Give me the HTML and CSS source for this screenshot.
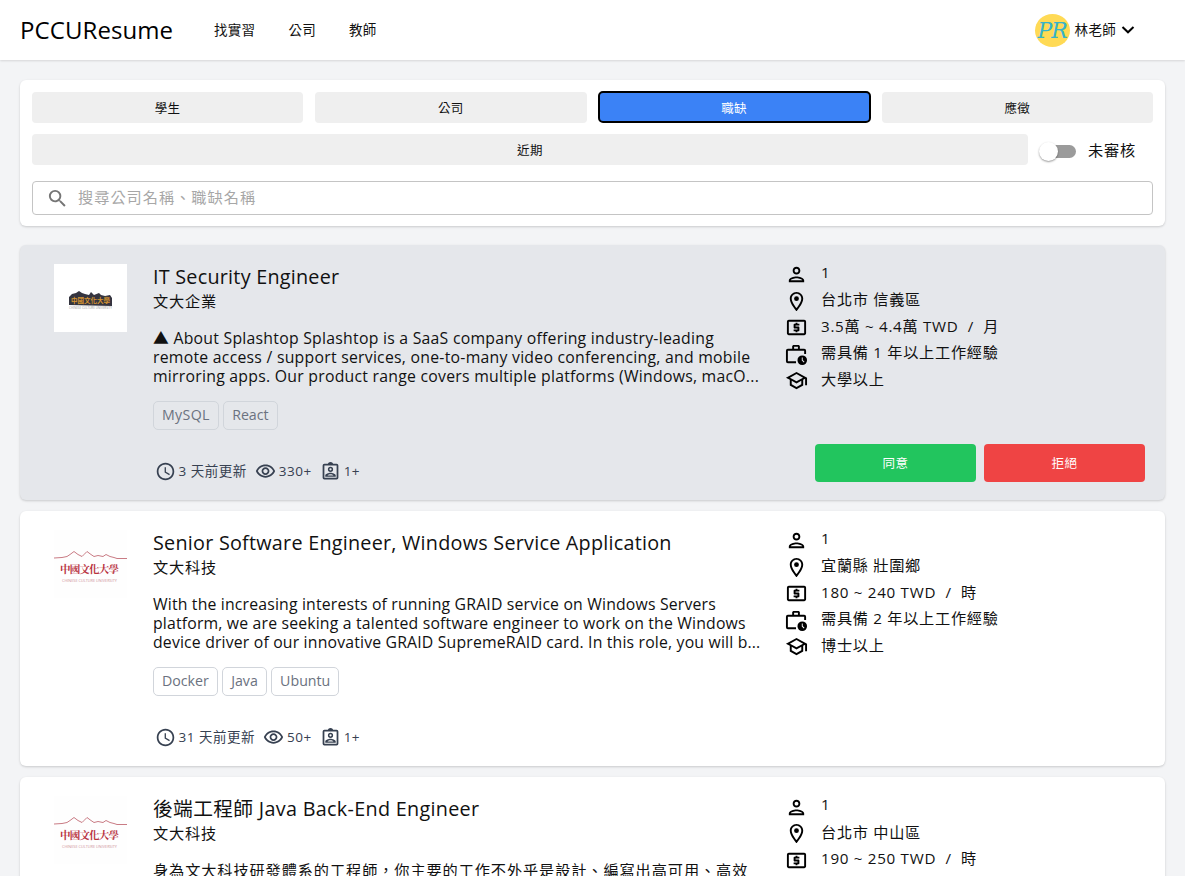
FILE: index.html
```html
<!DOCTYPE html>
<html lang="zh-Hant">
<head>
<meta charset="utf-8">
<title>PCCUResume</title>
<link rel="stylesheet" href="styles.css">
</head>
<body>
<svg class="sprite" aria-hidden="true">
  <symbol id="search" viewBox="0 0 24 24"><path d="M15.5 14h-.79l-.28-.27A6.471 6.471 0 0 0 16 9.500 6.500 6.500 0 1 0 9.500 16c1.610 0 3.090-.59 4.230-1.570l.27.28v.79l5 4.990L20.490 19l-4.990-5zm-6 0C7.010 14 5 11.990 5 9.500S7.010 5 9.500 5 14 7.010 14 9.500 11.990 14 9.500 14z"/></symbol>
  <symbol id="person" viewBox="0 0 24 24"><path d="M12 6c1.100 0 2 .9 2 2s-.9 2-2 2-2-.9-2-2 .9-2 2-2m0 10c2.700 0 5.800 1.290 6 2H6c.23-.72 3.310-2 6-2m0-12C9.790 4 8 5.790 8 8s1.790 4 4 4 4-1.790 4-4-1.790-4-4-4zm0 10c-2.670 0-8 1.340-8 4v2h16v-2c0-2.660-5.330-4-8-4z"/></symbol>
  <symbol id="place" viewBox="0 0 24 24"><path d="M12 2C8.130 2 5 5.130 5 9c0 5.250 7 13 7 13s7-7.750 7-13c0-3.870-3.130-7-7-7zM7 9c0-2.760 2.240-5 5-5s5 2.240 5 5c0 2.880-2.880 7.190-5 9.880C9.920 16.210 7 11.850 7 9z"/><circle cx="12" cy="9" r="2.500"/></symbol>
  <symbol id="pay" viewBox="0 0 24 24"><path d="M11 17h2v-1h1c.55 0 1-.45 1-1v-3c0-.55-.45-1-1-1h-3v-1h4V8h-2V7h-2v1h-1c-.55 0-1 .45-1 1v3c0 .55.45 1 1 1h3v1H9v2h2v1zm9-13H4c-1.110 0-1.990.89-1.990 2L2 18c0 1.110.89 2 2 2h16c1.110 0 2-.89 2-2V6c0-1.110-.89-2-2-2zm0 14H4V6h16v12z"/></symbol>
  <symbol id="work" viewBox="0 0 24 24"><path fill="none" stroke="currentColor" stroke-width="2" d="M11.500 20H3a1 1 0 0 1-1-1V8a1 1 0 0 1 1-1h17a1 1 0 0 1 1 1v3.500M8.500 7V3.500L9 3h5l.5.500V7"/><path fill-rule="evenodd" d="M18 13a5 5 0 1 0 0 10 5 5 0 0 0 0-10zm1.650 7.350L17.500 18.200V15h1v2.790l1.850 1.850z"/></symbol>
  <symbol id="school" viewBox="0 0 24 24"><path d="M12 3L1 9l4 2.180v6L12 21l7-3.820v-6l2-1.090V17h2V9L12 3zm6.820 6L12 12.720 5.180 9 12 5.280 18.820 9zM17 15.990l-5 2.730-5-2.730v-3.720L12 15l5-2.730v3.720z"/></symbol>
  <symbol id="clock" viewBox="0 0 24 24"><path d="M11.990 2C6.470 2 2 6.480 2 12s4.470 10 9.990 10C17.520 22 22 17.520 22 12S17.520 2 11.990 2zM12 20c-4.420 0-8-3.580-8-8s3.580-8 8-8 8 3.580 8 8-3.580 8-8 8zm.5-13H11v6l5.250 3.150.75-1.230-4.500-2.670z"/></symbol>
  <symbol id="eye" viewBox="0 0 24 24"><path d="M12 6c3.790 0 7.170 2.130 8.820 5.500C19.170 14.870 15.790 17 12 17s-7.170-2.130-8.820-5.500C4.830 8.130 8.210 6 12 6m0-2C7 4 2.730 7.110 1 11.500 2.730 15.890 7 19 12 19s9.270-3.110 11-7.500C21.270 7.110 17 4 12 4zm0 5c1.380 0 2.500 1.120 2.500 2.500S13.380 14 12 14s-2.500-1.120-2.500-2.500S10.620 9 12 9m0-2c-2.480 0-4.500 2.020-4.500 4.500S9.520 16 12 16s4.500-2.020 4.500-4.500S14.480 7 12 7z"/></symbol>
  <symbol id="badge" viewBox="0 0 24 24"><rect x="4" y="4" width="16" height="16" rx="1" fill="none" stroke="currentColor" stroke-width="2"/><path d="M9 4a3 3 0 0 1 6 0z"/><path fill-rule="evenodd" d="M12 6.500a3 3 0 1 0 0 6 3 3 0 0 0 0-6zm0 1.700a1.300 1.300 0 1 1 0 2.600 1.300 1.300 0 0 1 0-2.600zM6 18v-1.500c0-2 4-3.200 6-3.200s6 1.200 6 3.200V18zm2.500-1.400h7c-.7-.8-2.300-1.400-3.500-1.400s-2.800.6-3.500 1.400z"/></symbol>
</svg>

<header class="topbar">
  <div class="brand">PCCUResume</div>
  <nav class="nav"><a>找實習</a><a>公司</a><a>教師</a></nav>
  <div class="user">
    <span class="avatar">PR</span><span class="user-name">林老師</span>
    <svg class="chevron" viewBox="0 0 14 10"><path d="M1.500 2l5.500 5.300L12.500 2"/></svg>
  </div>
</header>

<main class="page">
  <section class="panel filters">
    <div class="tabs">
      <button class="tab">學生</button><button class="tab">公司</button><button class="tab tab-active">職缺</button><button class="tab">應徵</button>
    </div>
    <div class="recent-row">
      <button class="tab recent">近期</button>
      <span class="switch"><span class="track"></span><span class="thumb"></span></span>
      <span class="switch-label">未審核</span>
    </div>
    <div class="search"><svg class="search-icon"><use href="#search"/></svg><span class="placeholder">搜尋公司名稱、職缺名稱</span></div>
  </section>

  <article class="panel job job-selected">
    <svg class="logo" viewBox="0 0 73 68"><path fill="#34343f" d="M15 41v-8l3-3 4-1 3-2 3 2 3 1 4 1 2-3 3 3 5-2 2 2 4 1 5-1 2 3v8z"/><text class="logo-gold" x="17" y="39" textLength="39">中國文化大學</text><text class="logo-small" x="15" y="44.500" textLength="43" lengthAdjust="spacingAndGlyphs">CHINESE CULTURE UNIVERSITY</text></svg>
    <div class="info">
      <h2 class="title">IT Security Engineer</h2>
      <div class="company">文大企業</div>
      <p class="desc desc-loose">▲ About Splashtop Splashtop is a SaaS company offering industry-leading<br>remote access / support services, one-to-many video conferencing, and mobile<br>mirroring apps. Our product range covers multiple platforms (Windows, macO...</p>
      <div class="tags"><span class="tag tag-wide">MySQL</span><span class="tag">React</span></div>
      <div class="meta"><svg class="mi"><use href="#clock"/></svg><span class="updated">3 天前更新</span><svg class="mi"><use href="#eye"/></svg><span class="views">330+</span><svg class="mi"><use href="#badge"/></svg><span>1+</span></div>
    </div>
    <div class="side">
      <ul class="facts">
        <li><svg><use href="#person"/></svg><span>1</span></li>
        <li><svg><use href="#place"/></svg><span>台北市 信義區</span></li>
        <li><svg><use href="#pay"/></svg><span>3.5萬 ~ 4.4萬 TWD&nbsp; /&nbsp; 月</span></li>
        <li><svg><use href="#work"/></svg><span>需具備 1 年以上工作經驗</span></li>
        <li><svg><use href="#school"/></svg><span>大學以上</span></li>
      </ul>
      <div class="actions"><button class="btn approve">同意</button><button class="btn reject">拒絕</button></div>
    </div>
  </article>

  <article class="panel job">
    <svg class="logo" viewBox="0 0 73 68"><path class="ridge" d="M0 28l8-.5 5-1 3-2 4-3 4 3 4 2 2-2 3-3 4 3 3 2 4-1 5 1 3-2 4 2 4 1 3 1h10"/><text class="logo-main" x="6" y="43" textLength="59">中國文化大學</text><text class="logo-caption" x="8" y="52" textLength="55" lengthAdjust="spacingAndGlyphs">CHINESE CULTURE UNIVERSITY</text></svg>
    <div class="info">
      <h2 class="title">Senior Software Engineer, Windows Service Application</h2>
      <div class="company">文大科技</div>
      <p class="desc">With the increasing interests of running GRAID service on Windows Servers<br>platform, we are seeking a talented software engineer to work on the Windows<br>device driver of our innovative GRAID SupremeRAID card. In this role, you will b...</p>
      <div class="tags"><span class="tag">Docker</span><span class="tag">Java</span><span class="tag">Ubuntu</span></div>
      <div class="meta"><svg class="mi"><use href="#clock"/></svg><span class="updated">31 天前更新</span><svg class="mi"><use href="#eye"/></svg><span class="views">50+</span><svg class="mi"><use href="#badge"/></svg><span>1+</span></div>
    </div>
    <div class="side">
      <ul class="facts">
        <li><svg><use href="#person"/></svg><span>1</span></li>
        <li><svg><use href="#place"/></svg><span>宜蘭縣 壯圍鄉</span></li>
        <li><svg><use href="#pay"/></svg><span>180 ~ 240 TWD&nbsp; /&nbsp; 時</span></li>
        <li><svg><use href="#work"/></svg><span>需具備 2 年以上工作經驗</span></li>
        <li><svg><use href="#school"/></svg><span>博士以上</span></li>
      </ul>
    </div>
  </article>

  <article class="panel job">
    <svg class="logo" viewBox="0 0 73 68"><path class="ridge" d="M0 28l8-.5 5-1 3-2 4-3 4 3 4 2 2-2 3-3 4 3 3 2 4-1 5 1 3-2 4 2 4 1 3 1h10"/><text class="logo-main" x="6" y="43" textLength="59">中國文化大學</text><text class="logo-caption" x="8" y="52" textLength="55" lengthAdjust="spacingAndGlyphs">CHINESE CULTURE UNIVERSITY</text></svg>
    <div class="info">
      <h2 class="title title-zh">後端工程師 Java Back-End Engineer</h2>
      <div class="company">文大科技</div>
      <p class="desc desc-zh">身為文大科技研發體系的工程師，你主要的工作不外乎是設計、編寫出高可用、高效</p>
    </div>
    <div class="side">
      <ul class="facts">
        <li><svg><use href="#person"/></svg><span>1</span></li>
        <li><svg><use href="#place"/></svg><span>台北市 中山區</span></li>
        <li><svg><use href="#pay"/></svg><span>190 ~ 250 TWD&nbsp; /&nbsp; 時</span></li>
      </ul>
    </div>
  </article>
</main>
</body>
</html>
```
FILE: styles.css
```css
* { box-sizing: border-box; }
html, body { height: 100%; }
body {
  display: flex;
  flex-direction: column;
  margin: 0;
  overflow: hidden;
  background: #f3f4f6;
  color: #111;
  font-family: "Open Sans", "Noto Sans CJK TC", sans-serif;
  font-size: 15px;
}
button { font: inherit; border: 0; padding: 0; margin: 0; color: inherit; }
svg { fill: currentColor; flex: none; }
.sprite { display: none; }

.topbar {
  display: flex;
  flex: none;
  align-items: center;
  height: 60px;
  padding: 0 50px 0 20px;
  background: #fff;
  box-shadow: 0 1px 2px rgba(0, 0, 0, .12);
}
.brand { width: 194px; padding-bottom: 1px; color: #000; font-size: 24px; letter-spacing: .08px; white-space: nowrap; }
.nav { display: flex; gap: 33px; padding-bottom: 2px; font-size: 13.500px; letter-spacing: .3px; }
.user { display: flex; align-items: center; margin-left: auto; font-size: 13.500px; letter-spacing: .3px; }
.user-name { padding-bottom: 2px; }
.avatar {
  width: 35px; height: 33px; margin-right: 5px;
  border-radius: 50%;
  background: #ffda55;
  color: #36b3c9;
  font: italic 22px/33px "DejaVu Serif", "Liberation Serif", serif;
  letter-spacing: -1px;
  text-align: center;
}
.chevron { width: 14px; height: 10px; margin-left: 5px; fill: none; stroke: #000; stroke-width: 2; }

.page { flex: 1; min-height: 0; overflow: hidden; padding: 20px 20px 0; }
.panel {
  border-radius: 6px;
  background: #fff;
  box-shadow: 0 1px 3px rgba(0, 0, 0, .1), 0 1px 2px rgba(0, 0, 0, .08);
}
.filters { height: 146px; padding: 12px; margin-bottom: 19px; }
.tabs { display: grid; grid-template-columns: repeat(4, 1fr); gap: 12px; height: 30px; }
.tab { border-radius: 4px; background: #efefef; font-size: 12.500px; letter-spacing: .4px; height: 30.500px; }
.tab-active { background: #3b82f6; color: #fff; height: 30px; outline: 2px solid #000; outline-offset: -1px; }
.recent-row { display: flex; align-items: center; margin-top: 12px; height: 31px; }
.recent { width: 996px; }
.switch { display: flex; align-items: center; width: 37px; margin-left: 11px; }
.track { width: 31px; height: 13px; margin: 3px 0 0 6px; border-radius: 7px; background: #9b9b9b; }
.thumb {
  width: 19px; height: 19px; margin: 3px 0 0 -37px; flex: none;
  border-radius: 50%; background: #fff;
  box-shadow: 0 1px 2px rgba(0, 0, 0, .4);
}
.switch-label { margin-left: 12px; padding-bottom: 2px; font-size: 15.200px; letter-spacing: .8px; }
.search {
  display: flex; align-items: center;
  height: 34px; margin-top: 16px; padding-left: 13px;
  border: 1px solid #c4c4c4; border-radius: 4px;
  color: #a7a7a7; font-size: 15.200px; letter-spacing: 1px;
}
.search-icon { width: 23px; height: 23px; margin-right: 9px; color: #757575; }
.placeholder { padding-bottom: 4px; }

.job { display: flex; height: 255px; margin-bottom: 11.200px; padding: 19px 20px 0 34px; }
.job-selected { background: #e5e7eb; }
.job-selected .logo { background: #fff; }
.logo { width: 73px; height: 68px; background: #fefefe; }
.logo-gold { fill: #d49532; font: bold 6.500px "Noto Sans CJK TC", sans-serif; }
.logo-small { fill: #999; font: 3px "Open Sans", sans-serif; }
.logo-main { fill: #b8323e; font: bold 10.500px "Noto Serif CJK TC", "Noto Sans CJK TC", serif; }
.logo-caption { fill: #cf929a; font: 4px "Open Sans", sans-serif; }
.ridge { fill: none; stroke: #c97b84; stroke-width: 1; }
.info { flex: none; width: 658px; padding-left: 26px; }
.title { margin: 0; font-size: 19.800px; font-weight: 400; letter-spacing: .24px; line-height: 26px; white-space: nowrap; }
.title-zh { letter-spacing: .3px; }
.company { font-size: 15.200px; letter-spacing: .8px; line-height: 22px; }
.desc { margin: 17px 0 0; font-size: 15.800px; letter-spacing: .17px; line-height: 19px; white-space: nowrap; }
.desc-loose { letter-spacing: .25px; }
.desc-zh { font-size: 15.200px; letter-spacing: .9px; }
.tags { display: flex; gap: 4.300px; margin-top: 15px; }
.tag {
  height: 28.500px; padding: 0 8px;
  border: 1px solid #d1d5db; border-radius: 5px;
  color: #6b7280; font-size: 14.200px; line-height: 26px;
}
.tag-wide { letter-spacing: .35px; }
.meta { display: flex; align-items: center; margin: 32px 0 0 1.500px; height: 20px; color: #374151; font-size: 13.500px; letter-spacing: .5px; line-height: 20px; }
.meta span { padding-bottom: 1px; }
.mi { width: 21px; height: 21px; margin-right: 3px; }
.updated, .views { margin-right: 8px; white-space: nowrap; }
.side { flex: 1; }
.facts { margin: -5.500px 0 0; padding: 0; list-style: none; }
.facts svg { width: 23px; height: 23px; margin: 6px 13px 0 0; color: #000; }
.facts li { display: flex; align-items: center; height: 26.500px; white-space: nowrap; }
.facts span { font-size: 15.200px; letter-spacing: .7px; }
.actions { display: flex; gap: 8px; margin: 53px 0 0 30px; }
.btn { flex: 1; height: 37.500px; border-radius: 4px; color: #fff; font-size: 12.500px; letter-spacing: .4px; }
.approve { background: #22c55e; }
.reject { background: #ef4444; }
```
